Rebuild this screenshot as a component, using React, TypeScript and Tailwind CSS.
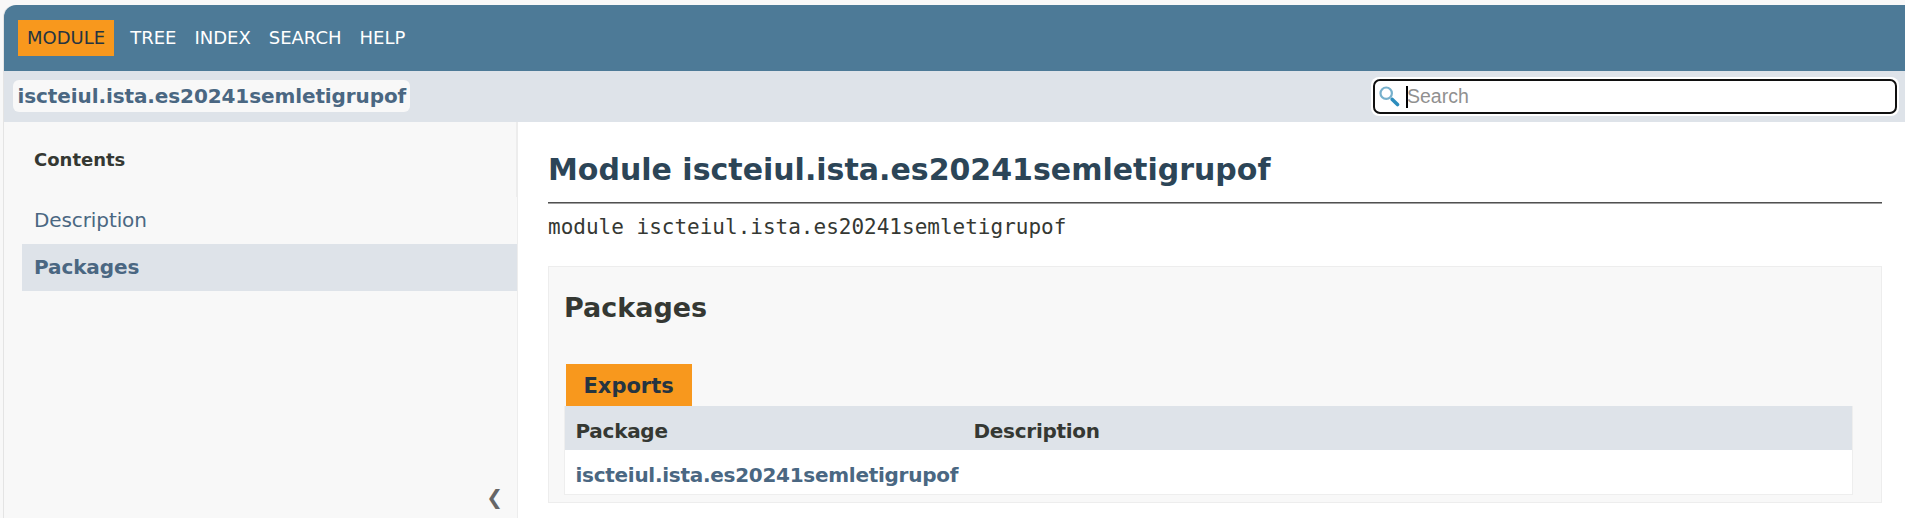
import React from "react";

const links = ["TREE", "INDEX", "SEARCH", "HELP"];

function TopBar() {
  return (
    <nav className="flex h-[66px] items-center gap-[18px] rounded-tl-[12px] bg-[#4D7A97] pl-[14px] text-[18px] leading-[36px] text-white">
      <span className="-mr-[2px] h-[36px] bg-[#F8981D] px-[9px] text-[#253441]">MODULE</span>
      {links.map((l) => (
        <a key={l} href="#">{l}</a>
      ))}
    </nav>
  );
}

function SearchIcon() {
  return (
    <svg className="ml-[4px] h-[21px] w-[21px]" viewBox="0 0 21 21" fill="none">
      <circle cx="7.2" cy="7.2" r="5.7" stroke="#76B0CC" strokeWidth="2.2" />
      <path d="M11.5 11.5l2 2" stroke="#9CC5DA" strokeWidth="1.8" />
      <path d="M13.3 13.5l5.2 5" stroke="#2C8DBD" strokeWidth="3.6" strokeLinecap="round" />
    </svg>
  );
}

function SubBar() {
  return (
    <div className="flex h-[51px] items-start justify-between bg-[#DEE3E9] pl-[9px]">
      <a href="#" className="mt-[9px] h-[32px] w-[397px] rounded-[6px] bg-[#F8F8F8] pl-[4.5px] text-[20px] font-bold leading-[33px] tracking-[-0.1px] text-[#4A6782]">
        iscteiul.ista.es20241semletigrupof
      </a>
      <div className="mr-[6px] mt-[6px] h-[39px] w-[528px] rounded-[8px] bg-white p-[2px]">
        <div className="flex h-[35px] items-center rounded-[7px] border-[2.5px] border-[#101010] bg-white">
          <SearchIcon />
          <span className="ml-[6px] h-[22px] w-[2px] bg-black" />
          <span className="-ml-px -mt-[2px] font-['Liberation_Sans',sans-serif] text-[19.5px] leading-[22px] text-[#909090]">Search</span>
        </div>
      </div>
    </div>
  );
}

function Sidebar() {
  return (
    <aside className="flex w-[514px] shrink-0 flex-col border-r border-[#EDEDED] bg-[#F8F8F8]">
      <div className="h-[75px] border-r border-[#EDEDED] pl-[30px] pt-[24px] text-[18px] font-bold leading-[28px] text-[#353833]">
        Contents
      </div>
      <a href="#" className="ml-[18px] h-[47px] pl-[12px] text-[20px] leading-[47px] tracking-[-0.1px] text-[#4A6782]">Description</a>
      <a href="#" className="ml-[18px] h-[47px] bg-[#DEE3E9] pl-[12px] text-[20px] font-bold leading-[47px] tracking-[-0.1px] text-[#4A6782]">Packages</a>
      <span className="mb-[5px] mr-[14px] mt-auto self-end text-[20px] leading-[32px] text-[#666666]">❮</span>
    </aside>
  );
}

function Packages() {
  return (
    <section className="mt-[21px] h-[237px] border border-[#EDEDED] bg-[#F8F8F8] pl-[15px] pr-[28px] pt-[24px] font-bold text-[#353833]">
      <h2 className="h-[73px] text-[27px] leading-[34px]">Packages</h2>
      <div className="ml-[2px] h-[42px] w-[126px] bg-[#F8981D] pl-[17.5px] text-[21px] leading-[45px] text-[#253441]">Exports</div>
      <div className="border-x border-b border-[#EEEEEE] text-[20px] tracking-[-0.28px]">
        <div className="grid h-[44px] grid-cols-[398px_1fr] bg-[#DEE3E9] pl-[10.5px] leading-[51px]">
          <span>Package</span>
          <span>Description</span>
        </div>
        <div className="h-[44px] bg-white pl-[10.5px] leading-[51px]">
          <a href="#" className="text-[#4A6782]">iscteiul.ista.es20241semletigrupof</a>
        </div>
      </div>
    </section>
  );
}

export default function App() {
  return (
    <div className="flex h-[518px] flex-col overflow-hidden bg-[#F8F8F8] pl-[3px] pt-[5px] font-['DejaVu_Sans',sans-serif]">
      <div className="flex min-h-0 grow flex-col rounded-tl-[12px] border-l border-[#E4E4E4]">
        <TopBar />
        <SubBar />
        <div className="flex min-h-0 grow">
          <Sidebar />
          <main className="min-w-0 grow bg-white pl-[30px] pr-[23px]">
            <h1 className="h-[80px] pt-[29px] text-[30px] font-bold leading-[38px] text-[#2C4557]">
              Module iscteiul.ista.es20241semletigrupof
            </h1>
            <div className="h-[2px] border-b border-t border-b-[#A0A0A0] border-t-[#505050]" />
            <div className="h-[41px] pt-[8px] font-['DejaVu_Sans_Mono',monospace] text-[21px] leading-[30px] text-[#353833]">
              module iscteiul.ista.es20241semletigrupof
            </div>
            <Packages />
          </main>
        </div>
      </div>
    </div>
  );
}
